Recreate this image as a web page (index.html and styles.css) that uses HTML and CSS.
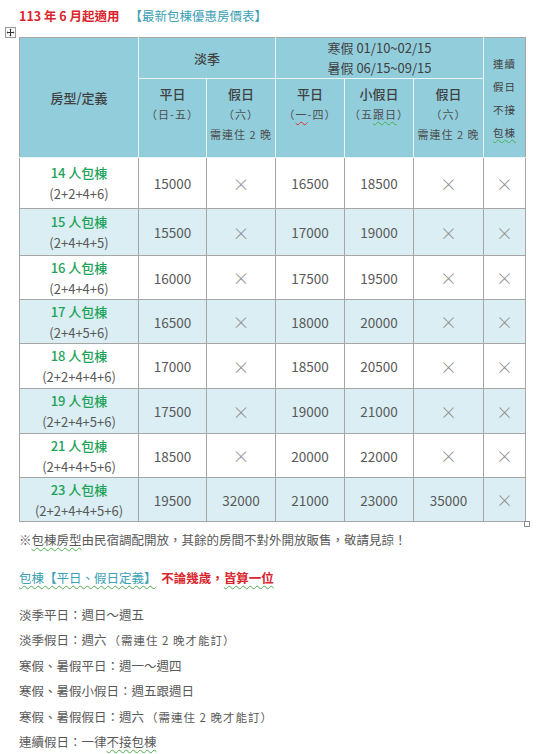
FILE: index.html
```html
<!DOCTYPE html>
<html lang="zh-Hant">
<head>
<meta charset="utf-8">
<title>包棟優惠房價表</title>
<link rel="stylesheet" href="styles.css">
</head>
<body>
<div class="page">
  <div class="title"><span class="t-red">113 年 6 月起適用</span><span class="t-teal">【最新包棟優惠房價表】</span></div>
  <div class="handle"><svg width="11" height="11" viewBox="0 0 11 11"><rect x="0.5" y="0.5" width="10" height="10" fill="#fff" stroke="#9a9a9a"/><path d="M5.5 2 L5.5 9 M2 5.5 L9 5.5" stroke="#333" stroke-width="1"/><path d="M5.5 1.6 L4.3 3 L6.7 3 Z M5.5 9.4 L4.3 8 L6.7 8 Z M1.6 5.5 L3 4.3 L3 6.7 Z M9.4 5.5 L8 4.3 L8 6.7 Z" fill="#333"/></svg></div>
  <div class="table-wrap">
  <table class="price">
    <colgroup>
      <col class="c1"><col class="c2"><col class="c3"><col class="c4"><col class="c5"><col class="c6"><col class="c7">
    </colgroup>
    <thead>
      <tr class="h1">
        <th rowspan="2">房型/定義</th>
        <th colspan="2">淡季</th>
        <th colspan="3"><div class="hl">寒假 01/10~02/15</div><div class="hl">暑假 06/15~09/15</div></th>
        <th rowspan="2" class="cont"><div>連續</div><div>假日</div><div>不接</div><div><span class="wg">包棟</span></div></th>
      </tr>
      <tr class="h2">
        <th><div class="hm">平日</div><div class="hs">（日-五）</div></th>
        <th><div class="hm">假日</div><div class="hs">（六）</div><div class="hs">需連住 2 晚</div></th>
        <th><div class="hm">平日</div><div class="hs">（<span class="wr">一</span>-四）</div></th>
        <th><div class="hm">小假日</div><div class="hs">（五<span class="wg">跟日</span>）</div></th>
        <th><div class="hm">假日</div><div class="hs">（六）</div><div class="hs">需連住 2 晚</div></th>
      </tr>
    </thead>
    <tbody>
      <tr class="r r1"><td class="room"><div class="rn">14 人包棟</div><div class="rc">(2+2+4+6)</div></td><td>15000</td><td class="x">×</td><td>16500</td><td>18500</td><td class="x">×</td><td class="x">×</td></tr>
      <tr class="r r2 alt"><td class="room"><div class="rn">15 人包棟</div><div class="rc">(2+4+4+5)</div></td><td>15500</td><td class="x">×</td><td>17000</td><td>19000</td><td class="x">×</td><td class="x">×</td></tr>
      <tr class="r r3"><td class="room"><div class="rn">16 人包棟</div><div class="rc">(2+4+4+6)</div></td><td>16000</td><td class="x">×</td><td>17500</td><td>19500</td><td class="x">×</td><td class="x">×</td></tr>
      <tr class="r r4 alt"><td class="room"><div class="rn">17 人包棟</div><div class="rc">(2+4+5+6)</div></td><td>16500</td><td class="x">×</td><td>18000</td><td>20000</td><td class="x">×</td><td class="x">×</td></tr>
      <tr class="r r5"><td class="room"><div class="rn">18 人包棟</div><div class="rc">(2+2+4+4+6)</div></td><td>17000</td><td class="x">×</td><td>18500</td><td>20500</td><td class="x">×</td><td class="x">×</td></tr>
      <tr class="r r6 alt"><td class="room"><div class="rn">19 人包棟</div><div class="rc">(2+2+4+5+6)</div></td><td>17500</td><td class="x">×</td><td>19000</td><td>21000</td><td class="x">×</td><td class="x">×</td></tr>
      <tr class="r r7"><td class="room"><div class="rn">21 人包棟</div><div class="rc">(2+4+4+5+6)</div></td><td>18500</td><td class="x">×</td><td>20000</td><td>22000</td><td class="x">×</td><td class="x">×</td></tr>
      <tr class="r r8 alt"><td class="room"><div class="rn">23 人包棟</div><div class="rc">(2+2+4+4+5+6)</div></td><td>19500</td><td>32000</td><td>21000</td><td>23000</td><td>35000</td><td class="x">×</td></tr>
    </tbody>
  </table>
  <span class="resize"></span>
  </div>
  <p class="note">※<span class="wg">包棟房型</span>由民宿調配開放，其餘的房間不對外開放販售，敬請見諒！</p>
  <p class="def"><span class="wg d-teal">包棟【平日、假日定義】</span> <span class="d-red">不論幾歲，<span class="wg">皆算一位</span></span></p>
  <div class="rules">
    <p>淡季平日：週日～週五</p>
    <p>淡季假日：週六<span class="hw">（需連住 2 晚才能訂）</span></p>
    <p>寒假、暑假平日：週一～週四</p>
    <p>寒假、暑假小假日：週五跟週日</p>
    <p>寒假、暑假假日：週六<span class="hw">（需連住 2 晚才能訂）</span></p>
    <p>連續假日：一律<span class="wg">不接包棟</span></p>
  </div>
</div>
</body>
</html>
```

FILE: styles.css
```css
html, body {
  margin: 0;
  padding: 0;
  background: #ffffff;
}
body {
  font-family: "Noto Sans CJK TC", "Noto Sans", sans-serif;
  color: #595959;
  width: 540px;
  height: 754px;
  overflow: hidden;
}
.page {
  position: relative;
  padding-top: 6px;
}
.title {
  padding-left: 19px;
  height: 20px;
  line-height: 20px;
  font-size: 12.5px;
  white-space: nowrap;
}
.t-red {
  color: #d9262e;
  font-weight: 700;
  margin-right: 10px;
}
.t-teal {
  color: #3aa0b4;
}
.handle {
  position: absolute;
  left: 5px;
  top: 27px;
  width: 11px;
  height: 11px;
  line-height: 0;
}
.table-wrap {
  position: relative;
  margin-top: 11px;
  margin-left: 19px;
  width: 506px;
}
.price {
  border-collapse: collapse;
  table-layout: fixed;
  width: 506px;
  font-size: 13px;
}
.c1 { width: 119px; }
.c2 { width: 68px; }
.c3 { width: 69px; }
.c4 { width: 69px; }
.c5 { width: 69px; }
.c6 { width: 70px; }
.c7 { width: 42px; }

.price th {
  background: #92cddc;
  color: #404040;
  font-weight: 500;
  border: 1px solid #eaf4f7;
  padding: 0;
  text-align: center;
  vertical-align: middle;
}
.price thead tr:first-child th {
  border-top-color: #a6a6a6;
}
.price thead th:first-child {
  border-left-color: #a6a6a6;
}
.price thead th.cont {
  border-right-color: #a6a6a6;
  font-weight: 400;
}
.h1 { height: 41px; }
.h2 { height: 79px; }
.hl {
  line-height: 20px;
  font-size: 13px;
  font-weight: 400;
}
.hm {
  line-height: 20px;
  font-size: 13px;
  font-weight: 500;
}
.h2 th {
  vertical-align: top;
  padding-top: 5px;
}
.hs {
  font-size: 11px;
  line-height: 20px;
  color: #4d4d4d;
  font-weight: 400;
  letter-spacing: 1px;
  white-space: nowrap;
}
.cont {
  font-size: 10.5px;
  letter-spacing: 1px;
}
.cont div {
  line-height: 23px;
}

.price td {
  border: 1px solid #a6a6a6;
  text-align: center;
  vertical-align: middle;
  padding: 0;
  color: #595959;
  font-size: 13.5px;
}
.price tr.alt td {
  background: #daeef3;
}
.r1 { height: 51px; }
.r2 { height: 47px; }
.r3, .r4, .r7, .r8 { height: 44px; }
.r5, .r6 { height: 45px; }
.room .rn {
  color: #1ea35a;
  font-weight: 500;
  line-height: 21px;
  font-size: 13px;
}
.room .rc {
  line-height: 21px;
  font-size: 13px;
  color: #595959;
}
.price td.x {
  color: #8c8c8c;
  font-size: 17px;
  font-weight: 300;
}
.resize {
  position: absolute;
  right: -5px;
  bottom: -5px;
  width: 4px;
  height: 4px;
  border: 1px solid #8c8c8c;
  background: #fff;
}
.wg {
  text-decoration: underline wavy #4caf50;
  text-decoration-thickness: 1px;
  text-underline-offset: 2px;
}
.wr {
  text-decoration: underline wavy #e03030;
  text-decoration-thickness: 1px;
  text-underline-offset: 2px;
}
.note {
  margin: 5px 0 0 19px;
  line-height: 25px;
  font-size: 12.5px;
  color: #595959;
}
.def {
  margin: 13px 0 0 19px;
  line-height: 25px;
  font-size: 12.5px;
}
.d-teal {
  color: #3aa0b4;
}
.d-red {
  color: #d9262e;
  font-weight: 700;
  margin-left: 2px;
}
.rules {
  margin: 12px 0 0 19px;
  font-size: 12.5px;
  color: #595959;
}
.rules p {
  margin: 0;
  height: 25.4px;
  line-height: 25.4px;
  overflow: visible;
}
.hw {
  font-size: 11.5px;
  line-height: 1;
  letter-spacing: 1px;
  margin-left: 2px;
}
```
